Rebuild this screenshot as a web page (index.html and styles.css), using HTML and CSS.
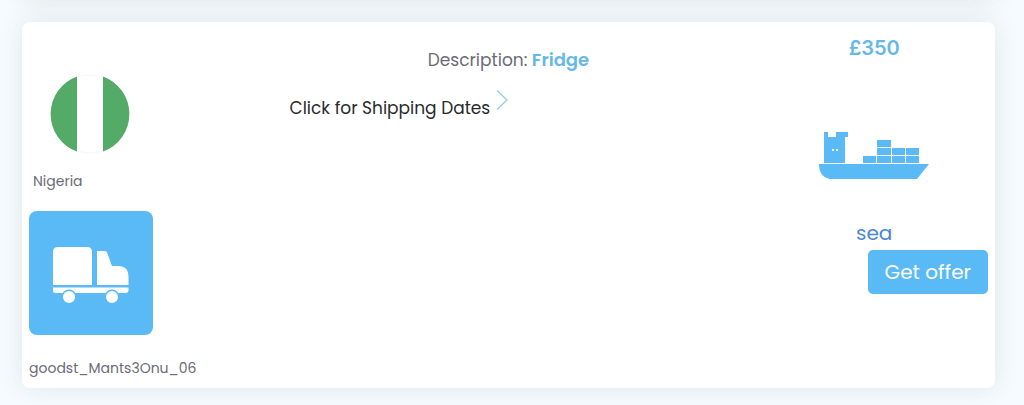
FILE: index.html
```html
<!doctype html>
<html lang="en">
<head>
<meta charset="UTF-8">
<meta name="viewport" content="width=device-width, initial-scale=1">
<title>Shipping request</title>
<link rel="stylesheet" href="styles.css">
</head>

<body>
	<main class="listing">
		<article class="card">
			<div class="card-user">
				<svg class="flag" viewBox="0 0 80 80" role="img" aria-label="Flag of Nigeria">
					<circle cx="40" cy="40" r="39" fill="#fff" stroke="#f7f7f7" stroke-width="1"/>
					<path d="M27 2.400A40 40 0 0 0 27 77.600Z" fill="#53ab67"/>
					<path d="M53 2.400A40 40 0 0 1 53 77.600Z" fill="#53ab67"/>
				</svg>
				<p class="country">Nigeria</p>
				<div class="tile">
					<svg viewBox="0 0 124 124" fill="#fff" aria-hidden="true">
						<path d="M24 74V41Q24 36 29 36H58Q63 36 63 41V74Z"/>
						<path d="M68 74V40H76Q77.500 40 78 41.500L83 55H89Q99.500 55 99.500 66V74Z"/>
						<path d="M24 76.500H99.500V79Q99.500 82 96.500 82H27Q24 82 24 80Z"/>
						<circle cx="40" cy="86" r="6.800" stroke="#5abaf6" stroke-width="1.500"/>
						<circle cx="83" cy="86" r="6.800" stroke="#5abaf6" stroke-width="1.500"/>
					</svg>
				</div>
				<p class="username">goodst_Mants3Onu_06</p>
			</div>

			<div class="card-info">
				<p class="description">Description: <strong>Fridge</strong></p>
				<button type="button" class="dates">
					<span>Click for Shipping Dates</span>
					<svg class="chevron" viewBox="0 0 12 22" aria-hidden="true">
						<path d="M1 1.500L11 11L1 20.500" fill="none" stroke="#9dcde8" stroke-width="1.500"/>
					</svg>
				</button>
			</div>

			<div class="card-offer">
				<p class="price">£350</p>
				<svg class="ship" viewBox="0 0 110 48" fill="#5abaf6" aria-hidden="true">
					<path d="M0 33H110L98 48H11Q0 46 0 33Z"/>
					<path d="M5 1H9V6H17V1H29V6H26V32H5Z"/>
					<path d="M44 25H57V32H44ZM58 9H72V16H58ZM58 17H72V24H58ZM58 25H72V32H58ZM73 17H86V24H73ZM73 25H86V32H73ZM87 17H100V24H87ZM87 25H100V32H87Z"/>
					<path d="M13 18H15V20H13ZM17 18H19V20H17Z" fill="#fff"/>
				</svg>
				<p class="mode">sea</p>
				<button type="button" class="offer">Get offer</button>
			</div>
		</article>
	</main>
</body>
</html>
```
FILE: styles.css
```css
* {
	box-sizing: border-box;
}

body {
	margin: 0;
	background-color: #f5fbfe;
	font-family: Poppins, Inter, "Noto Sans", sans-serif;
	color: #6b6b76;
}

p {
	margin: 0;
}

button {
	font-family: inherit;
	cursor: pointer;
}

.listing {
	padding: 22px 29px 17px 22px;
	overflow: hidden;
}

.card {
	display: grid;
	grid-template-columns: 11fr 18fr 11fr;
	background-color: #fff;
	border-radius: 8px;
	box-shadow: 0 0 24px rgba(80, 80, 70, 0.12), 0 -388px 24px rgba(80, 80, 70, 0.12);
}

.card-user {
	display: flex;
	flex-direction: column;
	align-items: flex-start;
	padding: 52px 7px 10px;
}

.flag {
	width: 80px;
	height: 80px;
	margin-left: 21px;
}

.country,
.username {
	font-size: 14px;
	line-height: 20px;
}

.country {
	margin: 17px 4px 20px;
}

.tile {
	width: 124px;
	height: 124px;
	margin-bottom: 23px;
	background-color: #5abaf6;
	border-radius: 8px;
}

.tile svg {
	display: block;
}

.card-info {
	padding-top: 26px;
}

.description {
	font-size: 17px;
	line-height: 24px;
	text-align: center;
}

.description strong {
	color: #66b8e8;
	font-size: 18px;
	font-weight: 600;
}

.dates {
	display: flex;
	gap: 6px;
	margin-top: 17px;
	padding: 0;
	border: 0;
	background: none;
	color: #2a2a2e;
	font-size: 17px;
	line-height: 24px;
}

.dates span {
	padding-top: 7px;
}

.chevron {
	width: 12px;
	height: 22px;
}

.card-offer {
	display: flex;
	flex-direction: column;
	align-items: center;
	padding: 14px 7px 0 33px;
}

.price {
	color: #66b8e8;
	font-family: Inter, "Liberation Sans", sans-serif;
	font-size: 20px;
	font-weight: 600;
	line-height: 24px;
}

.ship {
	width: 110px;
	height: 48px;
	margin-top: 71px;
}

.mode {
	margin-top: 42px;
	color: #4b86d6;
	font-size: 20px;
	line-height: 24px;
}

.offer {
	align-self: flex-end;
	margin-top: 5px;
	padding: 8px 17px;
	border: 0;
	border-radius: 5px;
	background-color: #5abaf6;
	color: #fff;
	font-size: 20px;
	line-height: 28px;
}
```
